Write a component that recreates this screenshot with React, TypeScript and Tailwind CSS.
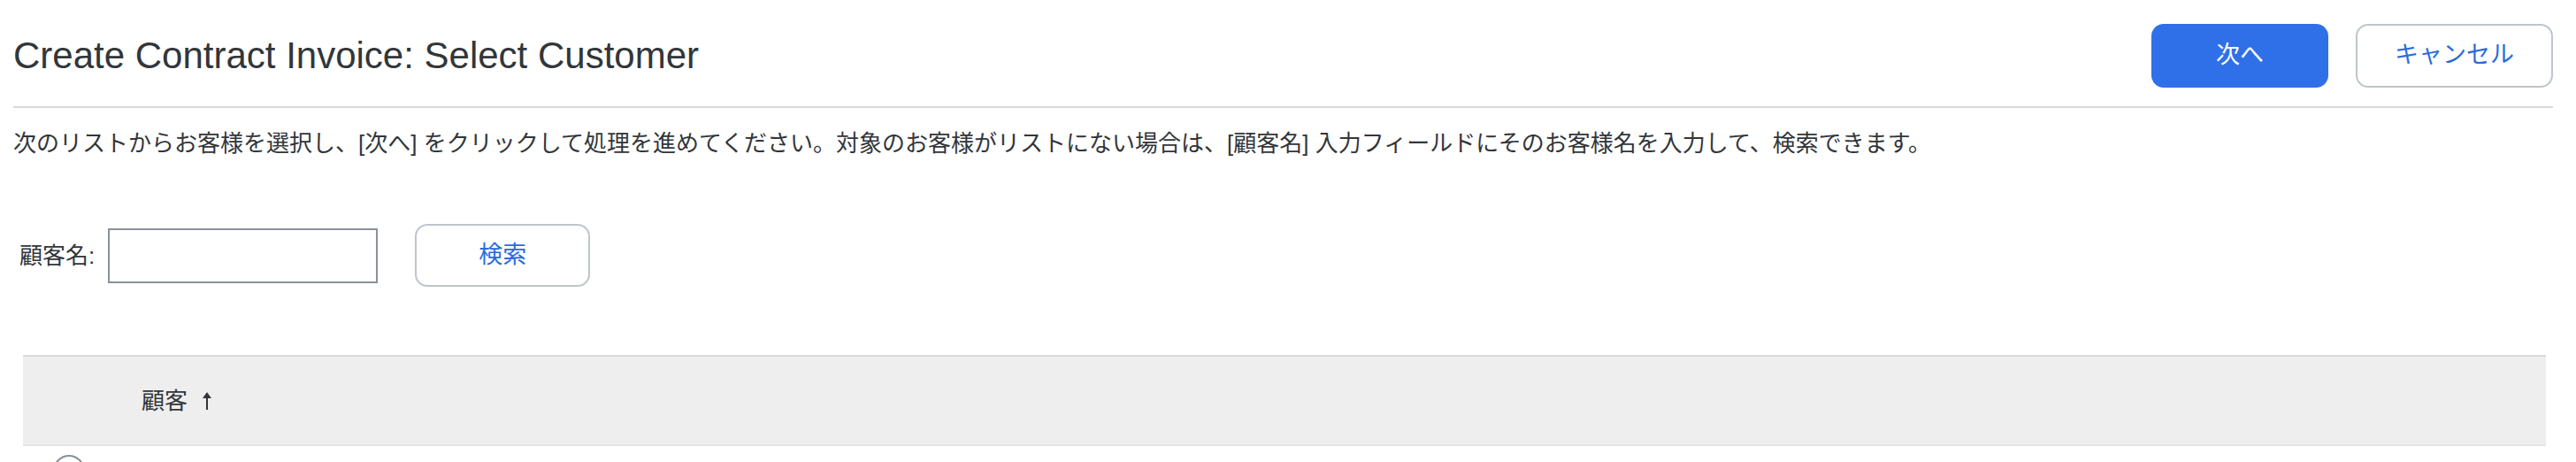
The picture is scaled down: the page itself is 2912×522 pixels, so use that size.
import React from 'react';

const font = "font-['Liberation_Sans','Noto_Sans_CJK_JP',sans-serif]";

const SortUp = () => (
  <svg width="12" height="22" viewBox="0 0 12 22" className="inline-block">
    <path d="M6 1 L11 8 L1 8 Z" fill="#32363a" />
    <rect x="5" y="7" width="2" height="14" fill="#32363a" />
  </svg>
);

const App: React.FC = () => {
  return (
    <div className={`w-full h-[522px] overflow-hidden bg-white pl-[15px] pr-[26px] text-[#32363a] ${font}`}>
      <header className="h-[122px] pt-[5px] flex items-center justify-between border-b-2 border-[#d9d9d9]">
        <h1 className="text-[42px] leading-none font-normal text-[#32363a]">Create Contract Invoice: Select Customer</h1>
        <div className="flex items-center gap-[31px]">
          <button className="w-[200px] h-[72px] rounded-[14px] bg-[#2f70e9] text-white text-[27px]">次へ</button>
          <button className="w-[223px] h-[72px] rounded-[14px] border-2 border-[#bfc5cc] bg-white text-[#2b6bdb] text-[27px]">キャンセル</button>
        </div>
      </header>

      <p className="mt-[25px] text-[26px] leading-[30px]">
        次のリストからお客様を選択し、[次へ] をクリックして処理を進めてください。対象のお客様がリストにない場合は、[顧客名] 入力フィールドにそのお客様名を入力して、検索できます。
      </p>

      <div className="mt-[76px] ml-[7px] flex items-center h-[71px]">
        <label className="text-[26px] leading-none">顧客名:</label>
        <input className="ml-[15px] w-[305px] h-[62px] border-2 border-[#8c9198] bg-white outline-none" />
        <button className="ml-[42px] w-[198px] h-[71px] rounded-[14px] border-2 border-[#bfc5cc] bg-white text-[#2b6bdb] text-[27px]">検索</button>
      </div>

      <div className="mt-[77px] ml-[11px] mr-[8px]">
        <div className="h-[103px] bg-[#eeeeee] border-t-2 border-b-2 border-t-[#d9d9d9] border-b-[#e4e4e4] flex items-center pl-[134px]">
          <span className="text-[26px] leading-none">顧客</span>
          <span className="ml-[16px] flex items-center"><SortUp /></span>
        </div>
        <div className="pl-[34px] pt-[10px]">
          <div className="w-[36px] h-[36px] rounded-full border-2 border-[#8a8f96] bg-white" />
        </div>
      </div>
    </div>
  );
};

export default App;
